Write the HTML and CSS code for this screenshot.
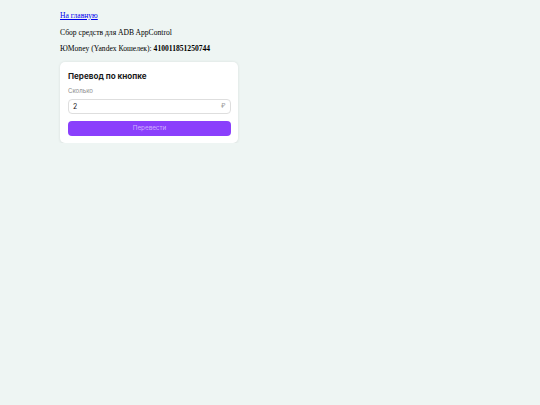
FILE: index.html
```html
<!DOCTYPE html>
<html lang="ru">
<head>
<meta charset="utf-8">
<link rel="stylesheet" href="styles.css">
</head>
<body>
<div class="page">
  <p class="line"><a href="#">На главную</a></p>
  <p class="line">Сбор средств для ADB AppControl</p>
  <p class="line">ЮMoney (Yandex Кошелек): <b>410011851250744</b></p>
  <div class="card">
    <div class="title">Перевод по кнопке</div>
    <div class="label">Сколько</div>
    <div class="input"><span class="val">2</span><span class="cur">₽</span></div>
    <div class="btn">Перевести</div>
  </div>
</div>
</body>
</html>
```
FILE: styles.css
```css
html, body { margin: 0; padding: 0; }
body { background: #eef5f3; font-family: "Liberation Serif", serif; font-size: 7.6px; color: #000; }
.page { padding: 12px 0 0 60px; }
.line { margin: 0 0 7.9px 0; line-height: 8.74px; }
.line a { color: #0000ee; }
.card { width: 178px; box-sizing: border-box; background: #fff; border-radius: 5px; box-shadow: 0 0.5px 3px rgba(0,0,0,0.09); padding: 8.6px 7px 7px 8px; font-family: "Inter", "Liberation Sans", sans-serif; margin-top: 8px; }
.title { font-weight: 700; font-size: 8.1px; line-height: 10px; color: #1a1a1a; }
.label { font-size: 6.1px; color: #8c8c8c; margin-top: 6.9px; line-height: 8px; }
.input { margin-top: 3.5px; height: 15px; box-sizing: border-box; border: 1px solid #dedede; border-radius: 4px; display: flex; align-items: center; justify-content: space-between; padding: 0 4.5px 0 4px; font-size: 7px; }
.val { color: #222; }
.cur { color: #9a9a9a; font-size: 6.5px; }
.btn { margin-top: 7px; height: 15px; background: #8a3ffc; border-radius: 4px; color: #cfb0ff; font-size: 6.3px; display: flex; align-items: center; justify-content: center; }
```
